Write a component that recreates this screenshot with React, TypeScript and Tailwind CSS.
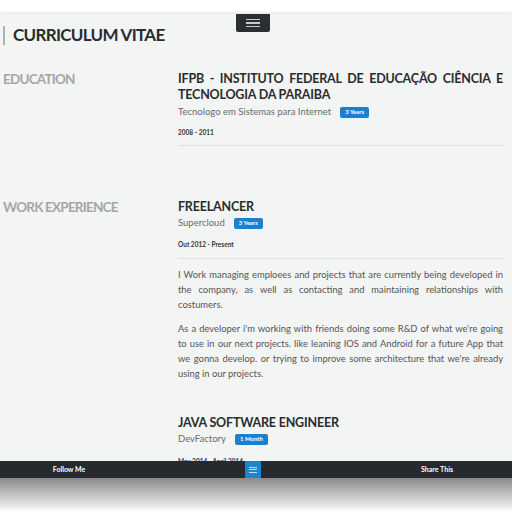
import React from "react";

const font = { fontFamily: "Lato, 'Open Sans', 'Liberation Sans', sans-serif" };

const paragraphs: string[][] = [
  [
    "I Work managing emploees and projects that are currently being developed in",
    "the company, as well as contacting and maintaining relationships with",
    "costumers.",
  ],
  [
    "As a developer i'm working with friends doing some R&D of what we're going",
    "to use in our next projects. like leaning IOS and Android for a future App that",
    "we gonna develop. or trying to improve some architecture that we're already",
    "using in our projects.",
  ],
];

function Badge({ label }: { label: string }) {
  return (
    <span className="inline-flex items-center h-[11px] px-[5px] rounded-[2px] bg-[#1a80d0] text-white text-[6px] font-bold leading-none">
      {label}
    </span>
  );
}

function MenuLines({ color }: { color: string }) {
  return (
    <div className="flex flex-col gap-[2px]">
      <div className={`w-[14px] h-[1.5px] ${color}`} />
      <div className={`w-[14px] h-[1.5px] ${color}`} />
      <div className={`w-[14px] h-[1.5px] ${color}`} />
    </div>
  );
}

// linhas justificadas para manter a mesma quebra do original
function Paragraph({ lines, className }: { lines: string[]; className: string }) {
  return (
    <div className={`text-[9.4px] leading-[15px] text-[#555] ${className}`}>
      {lines.map((l, i) => (
        <div
          key={i}
          className={`whitespace-nowrap ${i < lines.length - 1 ? "text-justify [text-align-last:justify]" : ""}`}
        >
          {l}
        </div>
      ))}
    </div>
  );
}

export default function App() {
  return (
    <div className="w-[512px] h-[512px] bg-white overflow-hidden flex flex-col" style={font}>
      <div className="h-[14px] shrink-0 bg-white" />

      {/* painel principal */}
      <div className="relative h-[447px] shrink-0 bg-[#f3f4f4] overflow-hidden shadow-[0_-1px_3px_rgba(0,0,0,0.12)]">
        <div className="absolute left-[236px] top-0 w-[34px] h-[18px] bg-[#2b2f33] rounded-b-[2px] flex items-center justify-center">
          <MenuLines color="bg-[#c9cbcd]" />
        </div>

        <div className="pt-[11px] flex items-center h-[31px]">
          <div className="ml-[3px] w-[2px] h-[19px] bg-[#b0b0b0]" />
          <h1 className="ml-[8px] text-[17px] leading-[20px] font-bold text-[#2a2c2e] tracking-[-0.7px]">
            CURRICULUM VITAE
          </h1>
        </div>

        {/* education */}
        <div className="grid grid-cols-[178px_325px] mt-[26px]">
          <h2 className="pl-[3px] text-[13.5px] leading-[16px] font-bold text-[#a6a6a6] tracking-[-0.8px]">EDUCATION</h2>
          <div>
            <h3 className="text-[12.5px] leading-[16px] font-bold text-[#2a2c2e] tracking-[-0.2px] text-justify">
              IFPB - INSTITUTO FEDERAL DE EDUCAÇÃO CIÊNCIA E TECNOLOGIA DA PARAIBA
            </h3>
            <div className="mt-[2px] flex items-center h-[14px] gap-[9px]">
              <span className="text-[9.5px] text-[#6b6b6b]">Tecnologo em Sistemas para Internet</span>
              <Badge label="3 Years" />
            </div>
            <p className="mt-[9px] text-[6.5px] leading-[10px] font-bold text-[#333]">2008 - 2011</p>
            <div className="mt-[7px] h-px bg-[#dedfe0]" />
          </div>
        </div>

        {/* work experience */}
        <div className="grid grid-cols-[178px_325px] mt-[53px]">
          <h2 className="pl-[3px] text-[13.5px] leading-[16px] font-bold text-[#a6a6a6] tracking-[-0.8px]">WORK EXPERIENCE</h2>
          <div>
            <h3 className="text-[12.5px] leading-[16px] font-bold text-[#2a2c2e] tracking-[-0.2px]">FREELANCER</h3>
            <div className="mt-[1px] flex items-center h-[14px] gap-[9px]">
              <span className="text-[9.5px] text-[#6b6b6b]">Supercloud</span>
              <Badge label="3 Years" />
            </div>
            <p className="mt-[10px] text-[6.5px] leading-[10px] font-bold text-[#333]">Out 2012 - Present</p>
            <div className="mt-[8px] h-px bg-[#dedfe0]" />
            <Paragraph lines={paragraphs[0]} className="mt-[8px]" />
            <Paragraph lines={paragraphs[1]} className="mt-[9px]" />

            <h3 className="mt-[34px] text-[12.5px] leading-[16px] font-bold text-[#2a2c2e] tracking-[-0.2px]">JAVA SOFTWARE ENGINEER</h3>
            <div className="mt-[1px] flex items-center h-[14px] gap-[9px]">
              <span className="text-[9.5px] text-[#6b6b6b]">DevFactory</span>
              <Badge label="1 Month" />
            </div>
            <p className="mt-[11px] text-[6.5px] leading-[10px] font-bold text-[#333]">May 2014 - April 2014</p>
          </div>
        </div>
      </div>

      {/* barra inferior */}
      <div className="h-[17px] shrink-0 bg-[#262a2e] flex items-center text-white text-[7px] font-bold">
        <div className="w-[138px] text-center">Follow Me</div>
        <div className="w-[107px]" />
        <div className="w-[16px] h-full bg-[#1a86d0] flex items-center justify-center">
          <div className="flex flex-col gap-[1.5px]">
            <div className="w-[8px] h-px bg-[#bfe0f5]" />
            <div className="w-[8px] h-px bg-[#bfe0f5]" />
            <div className="w-[8px] h-px bg-[#bfe0f5]" />
          </div>
        </div>
        <div className="flex-1 flex justify-end">
          <div className="w-[138px] text-center mr-[6px]">Share This</div>
        </div>
      </div>
      <div className="h-[34px] shrink-0 bg-gradient-to-b from-[#8a8a8a] to-white" />
    </div>
  );
}
